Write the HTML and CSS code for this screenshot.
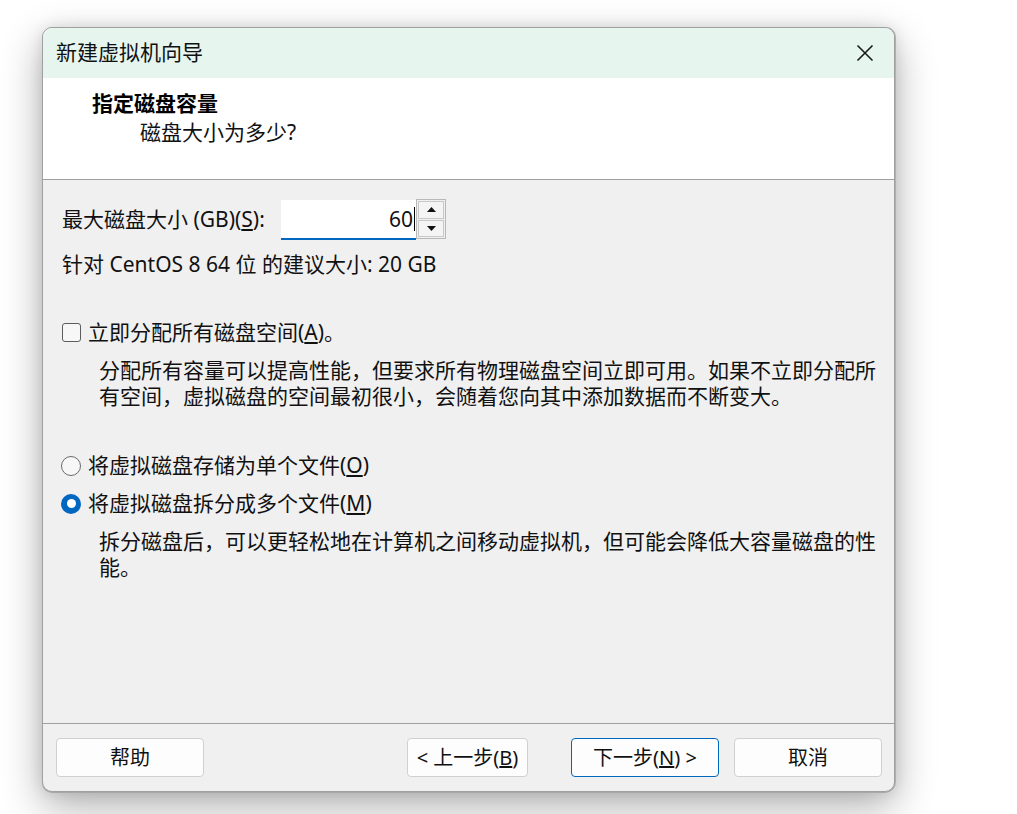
FILE: index.html
```html
<!DOCTYPE html>
<html lang="zh-CN">
<head>
<meta charset="utf-8">
<title>新建虚拟机向导</title>
<link rel="stylesheet" href="styles.css">
</head>
<body>
<div class="dialog">
  <div class="titlebar">
    <span class="title">新建虚拟机向导</span>
    <svg class="close" width="18" height="18" viewBox="0 0 18 18"><path d="M1.5 1.5 L16.5 16.5 M16.5 1.5 L1.5 16.5" stroke="#1a1a1a" stroke-width="1.6" fill="none"/></svg>
  </div>
  <div class="header">
    <div class="h-title">指定磁盘容量</div>
    <div class="h-sub">磁盘大小为多少?</div>
  </div>
  <div class="content">
    <div class="size-row">
      <span class="size-label">最大磁盘大小 (GB)(<u>S</u>):</span>
      <div class="spin">
        <div class="spin-input">60<span class="caret"></span></div>
        <div class="spin-btns">
          <div class="spin-btn"><svg width="9" height="5" viewBox="0 0 9 5"><path d="M0 5 L4.5 0 L9 5 Z" fill="#111"/></svg></div>
          <div class="spin-btn"><svg width="9" height="5" viewBox="0 0 9 5"><path d="M0 0 L9 0 L4.5 5 Z" fill="#111"/></svg></div>
        </div>
      </div>
    </div>
    <div class="recommend">针对 CentOS 8 64 位 的建议大小: 20 GB</div>

    <div class="opt-row first">
      <span class="checkbox"></span>
      <span class="opt-label">立即分配所有磁盘空间(<u>A</u>)。</span>
    </div>
    <p class="desc">分配所有容量可以提高性能，但要求所有物理磁盘空间立即可用。如果不立即分配所有空间，虚拟磁盘的空间最初很小，会随着您向其中添加数据而不断变大。</p>

    <div class="opt-row second">
      <span class="radio"></span>
      <span class="opt-label">将虚拟磁盘存储为单个文件(<u>O</u>)</span>
    </div>
    <div class="opt-row">
      <span class="radio checked"></span>
      <span class="opt-label">将虚拟磁盘拆分成多个文件(<u>M</u>)</span>
    </div>
    <p class="desc">拆分磁盘后，可以更轻松地在计算机之间移动虚拟机，但可能会降低大容量磁盘的性能。</p>
  </div>
  <div class="footer">
    <button class="btn">帮助</button>
    <div class="spacer"></div>
    <button class="btn back">&lt; 上一步(<u>B</u>)</button>
    <button class="btn next">下一步(<u>N</u>) &gt;</button>
    <button class="btn cancel">取消</button>
  </div>
</div>
</body>
</html>
```

FILE: styles.css
```css
* { box-sizing: border-box; }

html, body {
  margin: 0;
  padding: 0;
  background: #ffffff;
}

body {
  padding: 27px 0 0 42px;
  font-family: "Noto Sans", "Noto Sans CJK SC", sans-serif;
  font-size: 21px;
  color: #111;
  height: 814px;
  overflow: hidden;
}

.dialog {
  width: 853px;
  height: 765px;
  border: 1px solid #a0a0a0;
  border-radius: 10px;
  overflow: hidden;
  background: #f0f0f0;
  box-shadow: 0 1px 0 #a8a8a8, 1px 0 0 #b0b0b0, 0 14px 40px rgba(0, 0, 0, 0.32), 0 0 14px rgba(0, 0, 0, 0.10);
  display: flex;
  flex-direction: column;
}

.titlebar {
  height: 50px;
  flex: none;
  background: #e6f6ef;
  display: flex;
  align-items: center;
  padding: 0 20px 0 13px;
}

.title {
  flex: 1;
  font-size: 21px;
  line-height: 25px;
  color: #111;
  margin-top: -1px;
}

.close {
  display: block;
}

.header {
  flex: none;
  height: 102px;
  background: #ffffff;
  border-bottom: 1px solid #a0a0a0;
  padding: 13px 0 0 49px;
}

.h-title {
  font-weight: bold;
  font-size: 21px;
  line-height: 25px;
  color: #000;
}

.h-sub {
  margin-top: 4px;
  margin-left: 48px;
  line-height: 25px;
}

.content {
  flex: 1;
  padding: 19px 15px 0 18px;
}

.size-row {
  display: flex;
  align-items: center;
  height: 40px;
}

.size-label {
  width: 220px;
  padding-left: 1px;
  line-height: 25px;
}

.spin {
  display: flex;
  height: 40px;
}

.spin-input {
  width: 135px;
  height: 40px;
  margin-top: 1px;
  background: #ffffff;
  border-bottom: 2px solid #0067c0;
  display: flex;
  align-items: center;
  justify-content: flex-end;
  padding-right: 1px;
  line-height: 25px;
}

.caret {
  display: inline-block;
  width: 1px;
  height: 24px;
  background: #000;
  margin-left: 1px;
}

.spin-btns {
  width: 30px;
  height: 40px;
  border: 1px solid #b8b8b8;
  display: flex;
  flex-direction: column;
  padding: 1px;
  gap: 1px;
  background: #f0f0f0;
}

.spin-btn {
  flex: 1;
  border: 1px solid #c8c8c8;
  background: #f4f4f4;
  display: flex;
  align-items: center;
  justify-content: center;
}

.spin-btn svg { display: block; }

.recommend {
  margin-top: 13px;
  padding-left: 1px;
  line-height: 25px;
}

.opt-row {
  display: flex;
  align-items: center;
  margin-top: 13px;
  height: 25px;
}

.opt-row.first { margin-top: 43px; }
.opt-row.second { margin-top: 44px; }

.opt-label {
  line-height: 25px;
  margin-left: 7px;
}

.checkbox {
  width: 19px;
  height: 19px;
  border: 1px solid #5c5c5c;
  border-radius: 3px;
  background: #f7f7f7;
  flex: none;
  margin-left: 1px;
}

.radio {
  width: 20px;
  height: 20px;
  border: 1px solid #6a6a6a;
  border-radius: 50%;
  background: #f7f7f7;
  flex: none;
}

.radio.checked {
  border: none;
  background: #0067c0;
  display: flex;
  align-items: center;
  justify-content: center;
}

.radio.checked::after {
  content: "";
  width: 9px;
  height: 9px;
  border-radius: 50%;
  background: #ffffff;
}

.desc {
  margin: 13px 0 0 38px;
  line-height: 25.5px;
  width: 781px;
}

.footer {
  flex: none;
  height: 68px;
  border-top: 1px solid #a0a0a0;
  display: flex;
  align-items: flex-start;
  padding: 14px 12px 0 13px;
}

.spacer { flex: 1; }

.btn {
  height: 39px;
  width: 148px;
  background: #fdfdfd;
  border: 1px solid #d0d0d0;
  border-radius: 4px;
  font-family: "Noto Sans", "Noto Sans CJK SC", sans-serif;
  font-size: 20px;
  color: #111;
  padding: 0;
  line-height: 25px;
}

.btn.back { width: 121px; }
.btn.next { margin-left: 43px; border-color: #0067c0; }
.btn.cancel { margin-left: 15px; }
```
